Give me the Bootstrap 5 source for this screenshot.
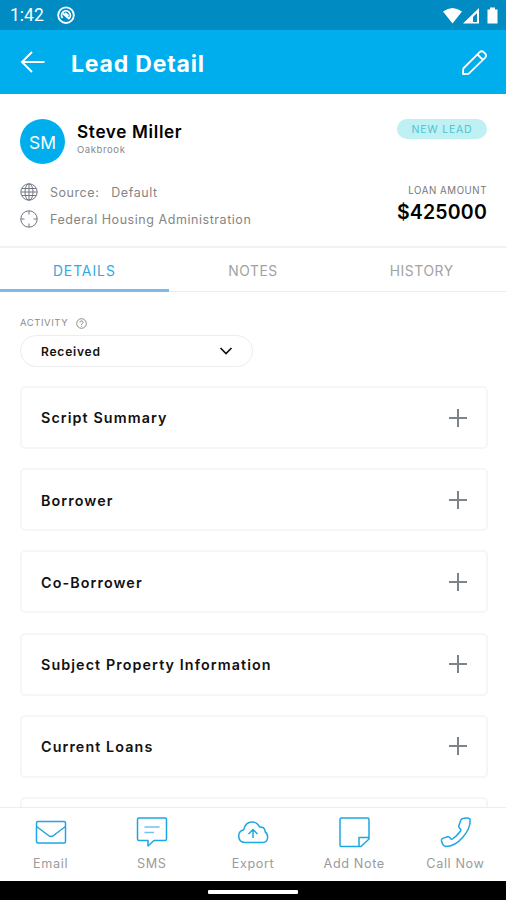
<!DOCTYPE html>
<html lang="en">
<head>
<meta charset="utf-8">
<meta name="viewport" content="width=device-width, initial-scale=1">
<title>Lead Detail</title>
<link href="https://cdn.jsdelivr.net/npm/bootstrap@5.3.0/dist/css/bootstrap.min.css" rel="stylesheet">
<style>
  body { font-family: Inter, "Open Sans", sans-serif; height: 900px; color: #111; line-height: 1; }
  svg { display: block; fill: none; stroke: currentColor; flex: none; }
  .status-bar { height: 30px; background: #008bc2; font: 400 17.5px/1 Roboto, sans-serif; padding: 2px 7px 0 10px; }
  .app-bar { height: 64px; background: #00aeee; padding: 2px 18px 0 20px; }
  .app-title { font-size: 23px; font-weight: 700; letter-spacing: .8px; margin-left: 25px; padding-top: 3px; }
  .lead-head { height: 153px; padding: 25px 19px 0 20px; }
  .avatar { width: 45px; height: 45px; background: #00aeee; font-size: 17.5px; padding-top: 2px; margin-right: 12px; }
  .lead-name { font-size: 17.2px; font-weight: 600; letter-spacing: .65px; color: #000; padding-top: 4px; }
  .lead-place { font-size: 9.5px; letter-spacing: .6px; color: #888; margin-top: 5px; }
  .lead-tag { width: 90px; height: 20px; background: #bff0f3; color: #4cc6d0; font-size: 10.5px; letter-spacing: .8px; padding-top: 2px; }
  .meta-block { padding-top: 14px; }
  .meta-line { font-size: 12.5px; letter-spacing: .55px; color: #858585; height: 27px; }
  .meta-line span { padding-top: 3px; }
  .meta-line svg { margin-right: 12px; color: #707780; }
  .amount-block { padding-top: 22px; }
  .amount-label { font-size: 9.7px; letter-spacing: .55px; color: #777; }
  .amount { font-size: 19.5px; font-weight: 600; letter-spacing: .2px; color: #000; margin-top: 7px; }
  .tab-row { height: 46px; border-top: 2px solid #f1f1f1; border-bottom: 1px solid #ececec; margin-top: -1px; }
  .tab-row .nav-link { height: 44px; padding: 4px 0 0; border-radius: 0; color: #a2a2a2; font-size: 13.8px; letter-spacing: .6px; }
  .tab-row .nav-link.active { color: #2fa8e6; border-bottom: 3px solid #7dbbe6; padding-top: 7px; letter-spacing: 1px; }
  .content-area { padding: 25px 18px 0 20px; min-height: 0; }
  .field-label { font-size: 9.5px; letter-spacing: .55px; color: #8c8c8c; height: 12px; }
  .picker { width: 233px; height: 32px; border: 1px solid #ededed; border-radius: 16px; padding: 1px 19px 0 20px; margin: 6px 0 19px; font-size: 12px; font-weight: 600; letter-spacing: .8px; background: #fff; color: #111; }
  .panel { height: 63px; flex: none; border: 2px solid #f6f6f6; border-radius: 5px; padding: 0 19px; margin-bottom: 19.2px; font-size: 14.3px; font-weight: 600; letter-spacing: 1.1px; color: #111; }
  .panel span { padding-top: 2px; }
  .panel svg { color: #7b838b; }
  .action-bar { height: 74px; border-top: 1px solid #ededed; background: #fff; }
  .action-item { font-size: 12.7px; letter-spacing: .6px; color: #9b9b9b; padding-top: 8px; }
  .action-item svg { color: #1ea5e2; margin-bottom: 10px; }
  .home-bar { height: 19px; background: #000; }
  .home-pill { width: 90px; height: 4px; background: #fff; border-radius: 1px; margin-top: 2px; }
</style>
</head>
<body class="d-flex flex-column overflow-hidden bg-white">
  <div class="status-bar d-flex align-items-center text-white flex-shrink-0">
    <span>1:42</span>
    <svg class="ms-2" width="26" height="20" viewBox="0 0 26 20" stroke-width="1.800"><circle cx="14" cy="9.200" r="7.800"/><path d="M10.500 12a4.400 4.400 0 1 1 6.500 .5"/><path d="M11 7.500l6.500 5.500M13 7l3.500 3" stroke-width="2.200"/></svg>
    <svg class="ms-auto" width="56" height="20" viewBox="0 0 56 20"><path stroke="none" fill="#fff" d="M0 5.500Q9.500-1.500 19 5.500L9.500 17.500z"/><path stroke="none" fill="#fff" fill-rule="evenodd" d="M20 17.500L36 2v15.500zM30 16h4V7l-4 4z"/><path stroke="none" fill="#fff" d="M44.500 3.500h2.500V1.500h5v2h2.500v14h-10z"/></svg>
  </div>
  <header class="app-bar d-flex align-items-center text-white flex-shrink-0">
    <svg width="26" height="24" viewBox="0 0 26 24" stroke-width="1.900"><path d="M24.500 11H2M12 1L2 11l10 10"/></svg>
    <h1 class="app-title mb-0">Lead Detail</h1>
    <svg class="ms-auto" width="27" height="27" viewBox="0 0 27 27" stroke-width="1.800" stroke-linejoin="round"><path d="M2 24l.3-5.500L18.700 2.100q2-1.800 4 0l1.500 1.500q1.800 2 0 4L7.500 23.800zM16.500 4.500l5.200 5.200"/></svg>
  </header>

  <section class="lead-head flex-shrink-0">
    <div class="d-flex align-items-start">
      <div class="avatar rounded-circle d-flex align-items-center justify-content-center text-white">SM</div>
      <div>
        <div class="lead-name">Steve Miller</div>
        <div class="lead-place">Oakbrook</div>
      </div>
      <div class="lead-tag rounded-pill ms-auto d-flex align-items-center justify-content-center">NEW LEAD</div>
    </div>
    <div class="d-flex justify-content-between">
      <div class="meta-block">
        <div class="meta-line d-flex align-items-center">
          <svg width="18" height="18" viewBox="0 0 18 18"><circle cx="9" cy="9" r="8.200"/><ellipse cx="9" cy="9" rx="4" ry="8.200"/><path d="M9 1v16M1 9h16M2 5.500h14M2 12.500h14"/></svg>
          <span>Source:</span><span class="ms-2 ps-1">Default</span>
        </div>
        <div class="meta-line d-flex align-items-center">
          <svg width="18" height="18" viewBox="0 0 18 18"><circle cx="9" cy="9" r="8.200"/><path d="M9 1v3.500M9 13.500v3.500M1 9h3.500M13.500 9h3.500"/></svg>
          <span>Federal Housing Administration</span>
        </div>
      </div>
      <div class="amount-block text-end">
        <div class="amount-label">LOAN AMOUNT</div>
        <div class="amount">$425000</div>
      </div>
    </div>
  </section>

  <nav class="tab-row nav nav-justified flex-shrink-0">
    <a class="nav-link active d-flex align-items-center justify-content-center" href="#">DETAILS</a>
    <a class="nav-link d-flex align-items-center justify-content-center" href="#">NOTES</a>
    <a class="nav-link d-flex align-items-center justify-content-center" href="#">HISTORY</a>
  </nav>

  <main class="content-area d-flex flex-column flex-grow-1 overflow-hidden">
    <div class="field-label d-flex align-items-center flex-shrink-0">ACTIVITY
      <svg class="ms-2" width="11" height="11" viewBox="0 0 11 11"><circle cx="5.500" cy="5.500" r="4.800"/><path d="M3.900 4.500q0-1.600 1.600-1.600t1.600 1.400q0 1-1.600 1.700v.8M5.500 7.700v1"/></svg>
    </div>
    <button class="picker d-flex align-items-center justify-content-between flex-shrink-0" type="button">Received
      <svg width="14" height="9" viewBox="0 0 14 9" stroke-width="1.700"><path d="M1.500 1L7 6.500 12.500 1"/></svg>
    </button>
    <div class="panel d-flex align-items-center justify-content-between"><span>Script Summary</span>
      <svg width="18" height="18" viewBox="0 0 18 18" stroke-width="2"><path d="M0 9h18M9 0v18"/></svg></div>
    <div class="panel d-flex align-items-center justify-content-between"><span>Borrower</span>
      <svg width="18" height="18" viewBox="0 0 18 18" stroke-width="2"><path d="M0 9h18M9 0v18"/></svg></div>
    <div class="panel d-flex align-items-center justify-content-between"><span>Co-Borrower</span>
      <svg width="18" height="18" viewBox="0 0 18 18" stroke-width="2"><path d="M0 9h18M9 0v18"/></svg></div>
    <div class="panel d-flex align-items-center justify-content-between"><span>Subject Property Information</span>
      <svg width="18" height="18" viewBox="0 0 18 18" stroke-width="2"><path d="M0 9h18M9 0v18"/></svg></div>
    <div class="panel d-flex align-items-center justify-content-between"><span>Current Loans</span>
      <svg width="18" height="18" viewBox="0 0 18 18" stroke-width="2"><path d="M0 9h18M9 0v18"/></svg></div>
    <div class="panel"></div>
  </main>

  <footer class="action-bar row g-0 flex-shrink-0">
    <div class="action-item col d-flex flex-column align-items-center">
      <svg width="32" height="32" viewBox="0 0 32 32" stroke-width="1.500"><rect x="1.500" y="5.500" width="29" height="21.500" rx="1.500"/><path d="M1.500 10.500l12 9q2.500 2 5 0l12-9"/></svg>Email</div>
    <div class="action-item col d-flex flex-column align-items-center">
      <svg width="32" height="32" viewBox="0 0 32 32" stroke-width="1.500" stroke-linejoin="round"><path d="M3 2h26q1.500 0 1.500 1.500V23q0 1.500-1.500 1.500H18L12 30v-5.500H3q-1.500 0-1.500-1.500V3.500Q1.500 2 3 2z"/><path d="M8.500 11h15M8.500 16.500h9.500" opacity=".65"/></svg>SMS</div>
    <div class="action-item col d-flex flex-column align-items-center">
      <svg width="32" height="32" viewBox="0 0 32 32" stroke-width="1.500" stroke-linejoin="round"><path d="M8 26.500q-6.300-.3-6.300-6.500 0-5 5-6.200Q8.500 6 15 6q5.500 0 7.500 5 5.500-.3 5.700 5 2.600 1.500 2.400 5.500-.4 5-4.600 5z"/><path d="M16 22v-8M11.500 18l4.500-4.500 4.500 4.500"/></svg>Export</div>
    <div class="action-item col d-flex flex-column align-items-center">
      <svg width="32" height="32" viewBox="0 0 32 32" stroke-width="1.500" stroke-linejoin="round"><path d="M3.500 2h26Q31 2 31 3.500v19.500l-8 7.500H3.500Q2 30.500 2 29V3.500Q2 2 3.500 2zM30.500 21.500H21V30"/></svg>Add Note</div>
    <div class="action-item col d-flex flex-column align-items-center">
      <svg width="32" height="32" viewBox="0 0 32 32" stroke-width="1.500" stroke-linejoin="round"><path d="M25 2.200q4-.8 6 .8 1 8.500-7 18-8 9.500-17.500 9.500-2.800-.8-4-5.500-.4-2 1.100-2.600l5-1.600q1.700-.4 2.400 1 .9 2 2.600 1 4.600-3 7.800-7.500 1.100-2-.5-3-1.500-.8-1-2.500l1.900-5.800q.5-1.500 3.200-1.800z"/></svg>Call Now</div>
  </footer>
  <div class="home-bar d-flex align-items-center justify-content-center flex-shrink-0"><div class="home-pill"></div></div>
<script src="https://cdn.jsdelivr.net/npm/bootstrap@5.3.0/dist/js/bootstrap.bundle.min.js"></script>
</body>
</html>
